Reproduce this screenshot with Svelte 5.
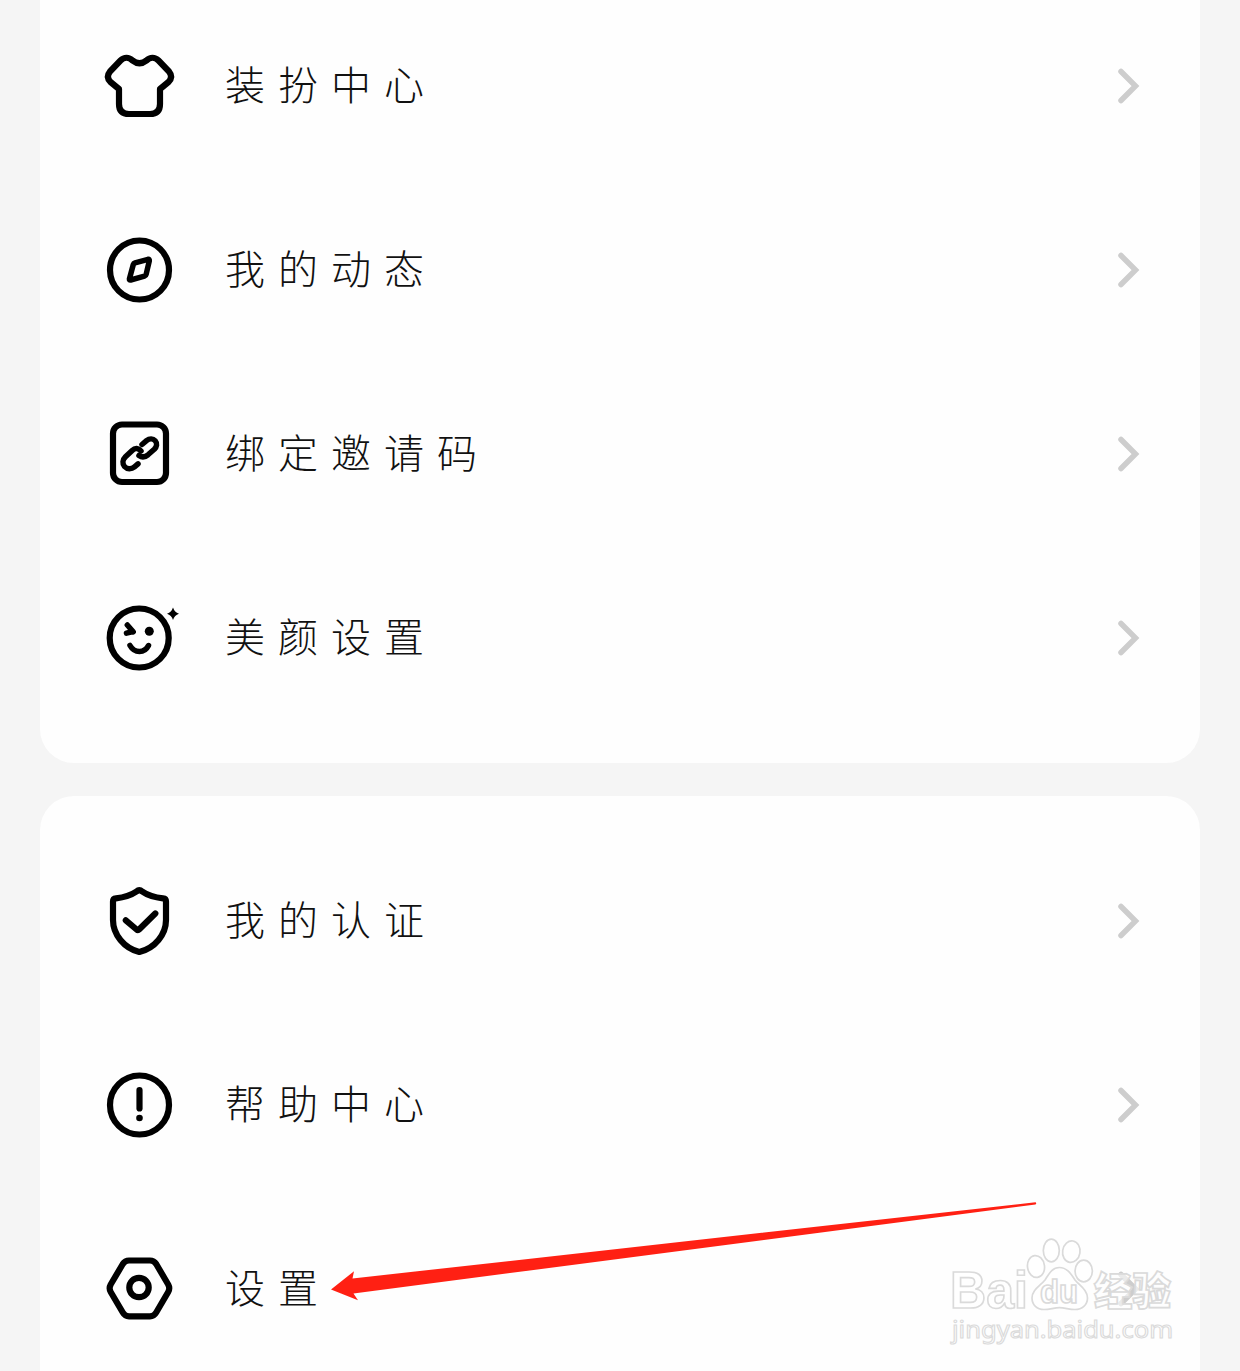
<script>
  const groups = [
    [
      { icon: 'shirt', label: '装扮中心' },
      { icon: 'compass', label: '我的动态' },
      { icon: 'link', label: '绑定邀请码' },
      { icon: 'smile', label: '美颜设置' },
    ],
    [
      { icon: 'shield', label: '我的认证' },
      { icon: 'help', label: '帮助中心' },
      { icon: 'settings', label: '设置' },
    ],
  ];
</script>

<main class="page">
  {#each groups as rows}
    <section class="card">
      {#each rows as row}
        <div class="row">
          <svg class="icon" viewBox="0 0 80 80" aria-hidden="true">
            {#if row.icon === 'shirt'}
              <path d="M20 43V58Q20 68 30 68H51Q61 68 61 58V43L69.500 36Q74.500 31 70 25.500L59.500 14.500C56 11 51 11 47.500 14.500C43 18 38 18 33.500 14.500C30 11 25 11 21.500 14.500L11 25.500Q6.500 31 11.500 36L20 43z" />
            {:else if row.icon === 'compass'}
              <circle cx="40.500" cy="40" r="29.500" />
              <path class="mid" d="M49 29.300L36 32.800Q34.700 33.200 34.300 34.500L30.400 49Q30.200 50.400 31.600 50L45.500 46.200Q46.800 45.800 47.100 44.500L50.300 30.800Q50.500 29 49 29.300z" />
            {:else if row.icon === 'link'}
              <rect x="14" y="10.500" width="53" height="57.500" rx="9" />
              <path class="mid" d="M43 30.500L47.500 26.700C50.500 24.300 54 24.300 56.200 26.800C58.500 29.500 57.800 32.800 55.300 35.300L49 40.800C46 43.300 42.500 43.300 40 41.500" />
              <path class="mid" d="M42 37C39.500 34 36 33.800 33.200 36.500L26.500 42.800C23.500 45.800 23.200 49.800 25.500 52.500C28 55.300 32.500 55.300 35.500 52.800L39 49.800" />
            {:else if row.icon === 'smile'}
              <circle cx="40.200" cy="40" r="29.500" />
              <path class="mid" d="M28.300 27L34 33.500L27.500 35.200M31.500 31L34.200 33.800M31 47.500C35.500 55.500 45.500 55.500 49.500 47.500" />
              <circle class="solid" cx="50.300" cy="33.300" r="4.500" />
              <path class="solid" d="M74 9.500Q75.500 14.200 80 15.700Q75.500 17.200 74 22Q72.500 17.200 68 15.700Q72.500 14.200 74 9.500z" />
            {:else if row.icon === 'shield'}
              <path d="M37.500 10.500Q40.300 7.800 43.200 10.500Q51 16 64 17.300Q67 17.600 67 20.500V39C67 53.500 56 67 40.300 71C25 67 14 53.500 14 39V20.500Q14 17.600 17 17.300Q29.500 16 37.500 10.500z" />
              <path d="M26.800 39.300L37.600 48.500Q39 49.600 40.300 48.300L56.300 32.500" />
            {:else if row.icon === 'help'}
              <circle cx="40.500" cy="40" r="29.500" />
              <path d="M40.500 25V43.500" />
              <circle class="solid" cx="40.500" cy="53" r="3.300" />
            {:else}
              <path d="M30 11.500H51Q55 11.500 57.200 15L69.200 35.500Q71.300 39.300 69.200 43L57.200 63.500Q55 67.300 51 67.300H30Q26 67.300 23.800 63.500L11.700 43Q9.600 39.300 11.700 35.500L23.800 15Q26 11.500 30 11.500z" />
              <circle cx="40" cy="38.500" r="9.700" />
            {/if}
          </svg>
          <span class="label">{row.label}</span>
          <svg class="chevron" viewBox="0 0 30 40" aria-hidden="true">
            <path d="M6 5.500L20.500 20L6 34.500" />
          </svg>
        </div>
      {/each}
    </section>
  {/each}

  <svg class="arrow" viewBox="0 0 710 102" aria-hidden="true">
    <path d="M1 89.600L24 71.200L22.500 78.500L705.500 2.200Q707 3.300 705.500 4.500L23.500 93.500L28 100.300z" />
  </svg>

  <svg class="watermark" viewBox="945 1230 235 120">
    <text class="brand latin" x="950" y="1308" font-size="52" textLength="78" lengthAdjust="spacingAndGlyphs">Bai</text>
    <path class="brand" d="M1059.300 1267.500C1067 1267.500 1071 1274 1075 1280C1080 1286 1087.500 1290 1087.500 1298C1087.500 1305 1082 1309.500 1075 1309.500C1069 1309.500 1065 1307.700 1059.500 1307.700C1054 1307.700 1050 1309.500 1044 1309.500C1037 1309.500 1032 1305 1032 1298C1032 1290 1040 1286 1045 1280C1049 1274 1052 1267.500 1059.300 1267.500z" />
    <ellipse class="brand" cx="1051.300" cy="1250.500" rx="8" ry="11.300" />
    <ellipse class="brand" cx="1071.300" cy="1251.700" rx="8.700" ry="10.800" transform="rotate(9 1071.300 1251.700)" />
    <ellipse class="brand" cx="1036" cy="1266.500" rx="8.500" ry="11" transform="rotate(-8 1036 1266.500)" />
    <ellipse class="brand" cx="1083.700" cy="1271" rx="8.700" ry="10.800" />
    <text class="brand latin" x="1040" y="1302.500" font-size="33" textLength="38" lengthAdjust="spacingAndGlyphs">du</text>
    <text class="brand han" x="1094" y="1304.500" font-size="38.500">经验</text>
    <text class="brand url" x="952" y="1337.500" font-size="24" textLength="221" lengthAdjust="spacingAndGlyphs">jingyan.baidu.com</text>
  </svg>
</main>

<style>
  :global(body) {
    background: #f5f5f5;
  }

  .page {
    position: relative;
    box-sizing: border-box;
    width: 1240px;
    height: 1371px;
    padding: 0 40px;
    display: flex;
    flex-direction: column;
    gap: 33px;
    overflow: hidden;
    background: #f5f5f5;
  }

  .card {
    flex: none;
    padding: 33px 55px 33px 59px;
    border-radius: 34px;
    background: #fefefe;
  }

  /* The list is scrolled, so the first card starts above the visible area. */
  .card:first-child {
    margin-top: -39px;
  }

  .row {
    display: flex;
    align-items: center;
    height: 184px;
  }

  .icon {
    flex: none;
    width: 80px;
    height: 80px;
    overflow: visible;
    fill: none;
    stroke: #000;
    stroke-width: 6.200;
    stroke-linecap: round;
    stroke-linejoin: round;
  }

  .mid {
    stroke-width: 5.500;
  }

  .solid {
    fill: #000;
    stroke: none;
  }

  .label {
    flex: 1;
    margin-left: 46px;
    padding-bottom: 6px;
    font-family: 'Noto Sans CJK SC', sans-serif;
    font-size: 40px;
    font-weight: 300;
    line-height: 60px;
    letter-spacing: 13px;
    color: #111;
  }

  .chevron {
    flex: none;
    width: 30px;
    height: 40px;
    fill: none;
    stroke: #cdcdcd;
    stroke-width: 5.500;
    stroke-linecap: round;
    stroke-linejoin: miter;
  }

  .arrow {
    position: absolute;
    left: 330px;
    top: 1200px;
    width: 710px;
    height: 102px;
    fill: #ff2013;
  }

  .watermark {
    position: absolute;
    left: 945px;
    top: 1230px;
    width: 235px;
    height: 120px;
  }

  .brand {
    fill: #fff;
    fill-opacity: 0.6;
    stroke: #dadada;
    stroke-width: 1.700;
  }

  .latin {
    font-family: 'Liberation Sans', sans-serif;
    font-weight: 700;
  }

  .han {
    font-family: 'Noto Sans CJK SC', sans-serif;
    font-weight: 900;
  }

  .url {
    font-family: 'Noto Sans', sans-serif;
    font-weight: 400;
    stroke-width: 1.100;
  }
</style>
